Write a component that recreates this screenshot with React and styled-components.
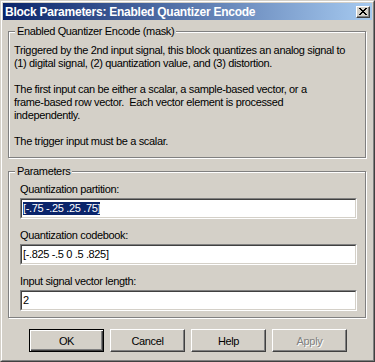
import React from "react";
import styled, { createGlobalStyle } from "styled-components";

const GlobalStyle = createGlobalStyle`
  html, body {
    margin: 0;
    padding: 0;
    background: #d4d0c8;
  }
  * {
    box-sizing: border-box;
  }
`;

const face = "#d4d0c8";

const Window = styled.div`
  width: 375px;
  height: 362px;
  background: ${face};
  border: 1px solid;
  border-color: ${face} #404040 #404040 ${face};
  font-family: "Liberation Sans", Arial, sans-serif;
  font-size: 11px;
  letter-spacing: -0.35px;
  color: #000;
  display: flex;
  flex-direction: column;
`;

const Inner = styled.div`
  flex: 1;
  display: flex;
  flex-direction: column;
  border: 1px solid;
  border-color: #fff #808080 #808080 #fff;
  padding: 1px;
`;

const TitleBar = styled.div`
  height: 17px;
  display: flex;
  align-items: center;
  justify-content: space-between;
  padding: 0 2px 0 2px;
  background: linear-gradient(to right, #0a246a, #a6caf0);
  color: #fff;
  font-weight: bold;
  font-size: 12px;
  letter-spacing: -0.25px;
`;

const CloseButton = styled.div`
  width: 14px;
  height: 12px;
  background: ${face};
  border: 1px solid;
  border-color: #fff #404040 #404040 #fff;
  box-shadow: inset -1px -1px 0 #808080;
  display: flex;
  align-items: center;
  justify-content: center;
`;

const Body = styled.div`
  flex: 1;
  display: flex;
  flex-direction: column;
  padding: 5px 6px 0 5px;
`;

const Group = styled.fieldset`
  margin: 0;
  min-width: 0;
  padding: ${({ $pad }) => $pad};
  border: 1px solid #808080;
  box-shadow: 1px 1px 0 #fff, inset 1px 1px 0 #fff;
  margin-top: ${({ $mt }) => $mt || "0"};
  height: ${({ $h }) => $h};
`;

const Legend = styled.legend`
  padding: 0 2px;
  margin-left: ${({ $ml }) => $ml};
  background: ${face};
  font-size: 11px;
  line-height: 13px;
`;

const Description = styled.div`
  line-height: 13px;
  white-space: pre;
`;

const FieldLabel = styled.div`
  line-height: 13px;
  margin-bottom: 2px;
`;

const Field = styled.div`
  height: 21px;
  border: 1px solid;
  border-color: #808080 #fff #fff #808080;
  margin-bottom: ${({ $mb }) => $mb || "0"};
`;

const FieldInner = styled.div`
  height: 100%;
  background: #fff;
  border: 1px solid;
  border-color: #404040 ${face} ${face} #404040;
  padding: 0 1px;
  display: flex;
  align-items: center;
  line-height: 13px;
`;

const Selected = styled.span`
  background: #0a246a;
  color: #fff;
`;

const ButtonRow = styled.div`
  display: flex;
  gap: 6px;
  padding: 11px 0 0 21px;
`;

const Button = styled.div`
  width: 75px;
  height: 23px;
  display: flex;
  align-items: center;
  justify-content: center;
  background: ${face};
  border: 1px solid;
  border-color: ${({ $default }) =>
    $default ? "#000" : "#fff #404040 #404040 #fff"};
  box-shadow: ${({ $default }) =>
    $default
      ? "inset 1px 1px 0 #fff, inset -1px -1px 0 #404040, inset -2px -2px 0 #808080"
      : "inset -1px -1px 0 #808080"};
  color: ${({ $disabled }) => ($disabled ? "#808080" : "#000")};
  text-shadow: ${({ $disabled }) => ($disabled ? "1px 1px 0 #fff" : "none")};
`;

export default function App() {
  return (
    <>
      <GlobalStyle />
      <Window>
        <Inner>
          <TitleBar>
            <span>Block Parameters: Enabled Quantizer Encode</span>
            <CloseButton>
              <svg width="8" height="7" viewBox="0 0 8 7">
                <path
                  d="M0 0h2v1h1v1h2v-1h1v-1h2v1h-1v1h-1v1h-1v1h1v1h1v1h1v1h-2v-1h-1v-1h-2v1h-1v1h-2v-1h1v-1h1v-1h1v-1h-1v-1h-1v-1h-1z"
                  fill="#000"
                />
              </svg>
            </CloseButton>
          </TitleBar>
          <Body>
            <Group $pad="6px 5px 0 5px" $h="133px">
              <Legend $ml="1px">Enabled Quantizer Encode (mask)</Legend>
              <Description>
                {`Triggered by the 2nd input signal, this block quantizes an analog signal to
(1) digital signal, (2) quantization value, and (3) distortion.

The first input can be either a scalar, a sample-based vector, or a
frame-based row vector.  Each vector element is processed
independently.

The trigger input must be a scalar.`}
              </Description>
            </Group>
            <Group $pad="5px 8px 0 11px" $h="153px" $mt="7px">
              <Legend $ml="-5px">Parameters</Legend>
              <FieldLabel>Quantization partition:</FieldLabel>
              <Field $mb="10px">
                <FieldInner>
                  <Selected>[-.75 -.25 .25 .75]</Selected>
                </FieldInner>
              </Field>
              <FieldLabel>Quantization codebook:</FieldLabel>
              <Field $mb="10px">
                <FieldInner>[-.825 -.5 0 .5 .825]</FieldInner>
              </Field>
              <FieldLabel>Input signal vector length:</FieldLabel>
              <Field>
                <FieldInner>2</FieldInner>
              </Field>
            </Group>
            <ButtonRow>
              <Button $default>OK</Button>
              <Button>Cancel</Button>
              <Button>Help</Button>
              <Button $disabled>Apply</Button>
            </ButtonRow>
          </Body>
        </Inner>
      </Window>
    </>
  );
}
